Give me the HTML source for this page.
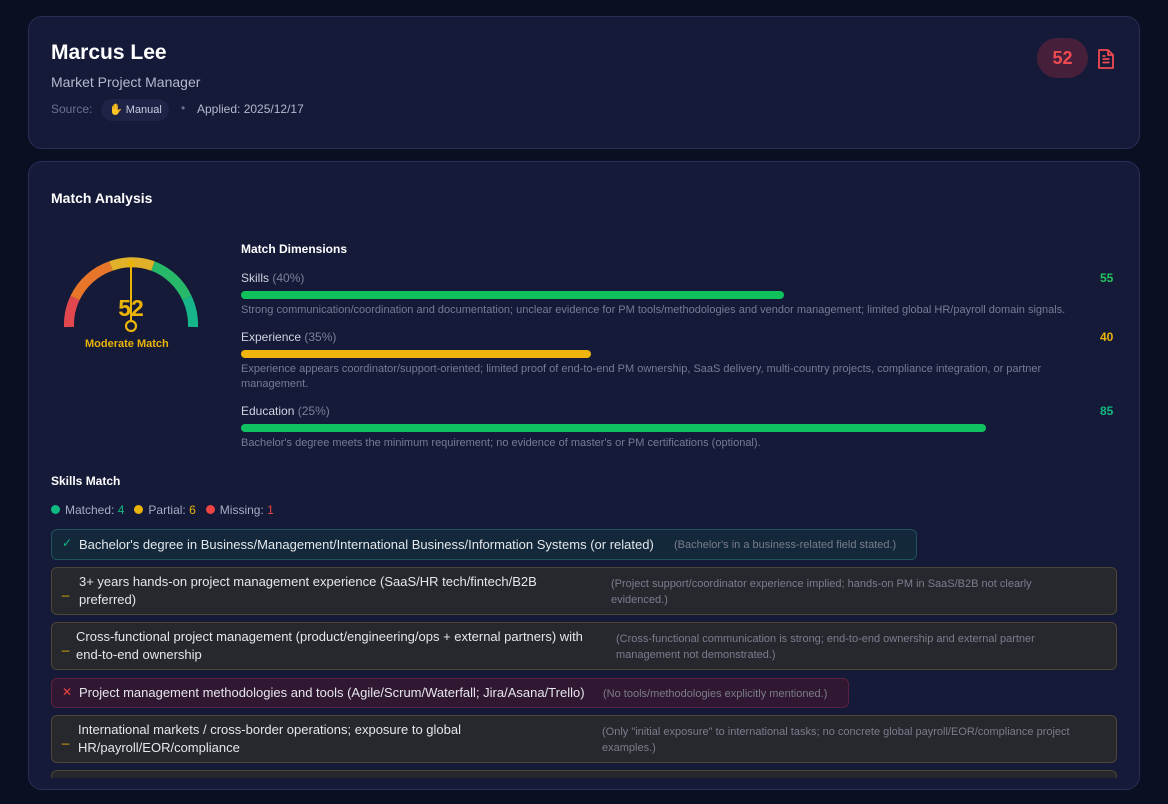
<!DOCTYPE html>
<html><head><meta charset="utf-8"><style>
*{box-sizing:border-box;margin:0;padding:0}
body{width:1168px;height:804px;background:#0b0f22;font-family:"Liberation Sans",sans-serif;position:relative;overflow:hidden;color:#e5e7eb}
.card{position:absolute;left:28px;width:1112px;background:#141a38;border:1px solid #283058;border-radius:14px}
.a{position:absolute;white-space:nowrap}
.bar{position:absolute;left:241px;height:8px;border-radius:4px}
.desc{position:absolute;left:241px;font-size:11px;color:#767c94;line-height:15px}
.row{position:absolute;left:51px;border-radius:6px;border:1px solid}
.p{background:#27272e;border-color:#4d4633}
.row .m{position:absolute;font-size:13px;color:#e5e7eb;line-height:18px;white-space:nowrap}
.row .n{position:absolute;font-size:11px;color:#7a7d8c;line-height:16px;white-space:nowrap}
.ic{position:absolute;font-size:13px}
</style></head><body>
<div class="card" style="top:16px;height:133px"></div>
<div class="a" style="left:51px;top:41px;font-size:21px;font-weight:bold;color:#fff">Marcus Lee</div>
<div class="a" style="left:51px;top:74px;font-size:14px;color:#b4b9cc">Market Project Manager</div>
<div class="a" style="left:51px;top:102px;font-size:12px;color:#6b7190">Source:</div>
<div class="a" style="left:101px;top:99px;height:22px;width:68px;background:#1d2446;border-radius:11px;font-size:11px;color:#c8cce0;line-height:22px;padding-left:8px"><span style="color:#f5b81c">✋</span> Manual</div>
<div class="a" style="left:181px;top:101px;font-size:12px;color:#6b7190">•</div>
<div class="a" style="left:197px;top:102px;font-size:12px;color:#b4b9cc">Applied: 2025/12/17</div>
<div class="a" style="left:1037px;top:38px;width:51px;height:40px;border-radius:20px;background:#46203a;color:#ef4a50;font-size:18px;font-weight:bold;text-align:center;line-height:40px">52</div>
<svg class="a" style="left:1096px;top:48px" width="20" height="22" viewBox="0 0 20 22" fill="none" stroke="#ef4a50" stroke-width="1.8" stroke-linejoin="round"><path d="M3 2h9l5 5v13H3z"/><path d="M12 2v5h5"/><path d="M6.5 11h7M6.5 14.5h7M6.5 8h3"/></svg>

<div class="card" style="top:161px;height:629px"></div>
<div class="a" style="left:51px;top:190px;font-size:14px;font-weight:bold;color:#fff">Match Analysis</div>

<svg class="a" style="left:55px;top:250px" width="155" height="100" viewBox="55 250 155 100">
<g fill="none" stroke-width="10">
<path d="M69 327 A62 62 0 0 1 75 298" stroke="#e0474f"/>
<path d="M75 298 A62 62 0 0 1 111 266" stroke="#e8762a"/>
<path d="M111 266 A62 62 0 0 1 153 266" stroke="#e1b12a"/>
<path d="M153 266 A62 62 0 0 1 187 298" stroke="#27b86a"/>
<path d="M187 298 A62 62 0 0 1 193 327" stroke="#16b58a"/>
</g>
<line x1="131" y1="320" x2="131" y2="264" stroke="#eab308" stroke-width="2"/>
<circle cx="131" cy="264" r="3.5" fill="#eab308"/>
<circle cx="131" cy="326" r="5" fill="#141a38" stroke="#eab308" stroke-width="2.2"/>
<text x="131" y="316" text-anchor="middle" font-family="Liberation Sans" font-size="23" font-weight="bold" fill="#eab308">52</text>
</svg>
<div class="a" style="left:85px;top:338px;font-size:11px;font-weight:bold;color:#eab308">Moderate Match</div>

<div class="a" style="left:241px;top:242px;font-size:12px;font-weight:bold;color:#fff">Match Dimensions</div>
<div class="a" style="left:241px;top:271px;font-size:12px;color:#d0d3e0">Skills <span style="color:#7c8199">(40%)</span></div>
<div class="a" style="left:1100px;top:271px;font-size:12px;font-weight:bold;color:#22c55e">55</div>
<div class="bar" style="top:291px;width:543px;background:#0fc15b"></div>
<div class="desc" style="top:303px">Strong communication/coordination and documentation; unclear evidence for PM tools/methodologies and vendor management; limited global HR/payroll domain signals.</div>
<div class="a" style="left:241px;top:330px;font-size:12px;color:#d0d3e0">Experience <span style="color:#7c8199">(35%)</span></div>
<div class="a" style="left:1100px;top:330px;font-size:12px;font-weight:bold;color:#eab308">40</div>
<div class="bar" style="top:350px;width:350px;background:#f0b40c"></div>
<div class="desc" style="top:362px;width:870px;white-space:normal">Experience appears coordinator/support-oriented; limited proof of end-to-end PM ownership, SaaS delivery, multi-country projects, compliance integration, or partner management.</div>
<div class="a" style="left:241px;top:404px;font-size:12px;color:#d0d3e0">Education <span style="color:#7c8199">(25%)</span></div>
<div class="a" style="left:1100px;top:404px;font-size:12px;font-weight:bold;color:#10b981">85</div>
<div class="bar" style="top:424px;width:745px;background:#0fc160"></div>
<div class="desc" style="top:436px">Bachelor's degree meets the minimum requirement; no evidence of master's or PM certifications (optional).</div>

<div class="a" style="left:51px;top:474px;font-size:12px;font-weight:bold;color:#fff">Skills Match</div>
<div class="a" style="left:51px;top:503px;font-size:12px;color:#a8adc2"><span style="display:inline-block;width:9px;height:9px;border-radius:50%;background:#10b981;margin-right:5px"></span>Matched: <span style="color:#10b981">4</span>&nbsp;&nbsp;&nbsp;<span style="display:inline-block;width:9px;height:9px;border-radius:50%;background:#eab308;margin-right:5px"></span>Partial: <span style="color:#eab308">6</span>&nbsp;&nbsp;&nbsp;<span style="display:inline-block;width:9px;height:9px;border-radius:50%;background:#ef4444;margin-right:5px"></span>Missing: <span style="color:#ef4444">1</span></div>

<div class="row" style="top:529px;width:866px;height:31px;background:#13283a;border-color:#1f5358">
<span class="ic" style="left:10px;top:6px;color:#10b981;font-size:12px">✓</span>
<span class="m" style="left:27px;top:6px">Bachelor's degree in Business/Management/International Business/Information Systems (or related)</span>
<span class="n" style="left:622px;top:7px">(Bachelor's in a business-related field stated.)</span></div>

<div class="row p" style="top:567px;width:1066px;height:48px">
<span class="ic" style="left:10px;top:14px;color:#eab308">_</span>
<span class="m" style="left:27px;top:5px">3+ years hands-on project management experience (SaaS/HR tech/fintech/B2B<br>preferred)</span>
<span class="n" style="left:559px;top:8px">(Project support/coordinator experience implied; hands-on PM in SaaS/B2B not clearly<br>evidenced.)</span></div>

<div class="row p" style="top:622px;width:1066px;height:48px">
<span class="ic" style="left:10px;top:14px;color:#eab308">_</span>
<span class="m" style="left:24px;top:5px">Cross-functional project management (product/engineering/ops + external partners) with<br>end-to-end ownership</span>
<span class="n" style="left:564px;top:8px">(Cross-functional communication is strong; end-to-end ownership and external partner<br>management not demonstrated.)</span></div>

<div class="row" style="top:678px;width:798px;height:30px;background:#301732;border-color:#5c2140">
<span class="ic" style="left:10px;top:6px;color:#ef4444;font-size:12px">✕</span>
<span class="m" style="left:27px;top:5px">Project management methodologies and tools (Agile/Scrum/Waterfall; Jira/Asana/Trello)</span>
<span class="n" style="left:551px;top:7px">(No tools/methodologies explicitly mentioned.)</span></div>

<div class="row p" style="top:715px;width:1066px;height:48px">
<span class="ic" style="left:10px;top:14px;color:#eab308">_</span>
<span class="m" style="left:26px;top:5px">International markets / cross-border operations; exposure to global<br>HR/payroll/EOR/compliance</span>
<span class="n" style="left:550px;top:8px">(Only "initial exposure" to international tasks; no concrete global payroll/EOR/compliance project<br>examples.)</span></div>

<div class="row p" style="top:770px;width:1066px;height:8px;border-bottom:none;border-radius:6px 6px 0 0"></div>
</body></html>
